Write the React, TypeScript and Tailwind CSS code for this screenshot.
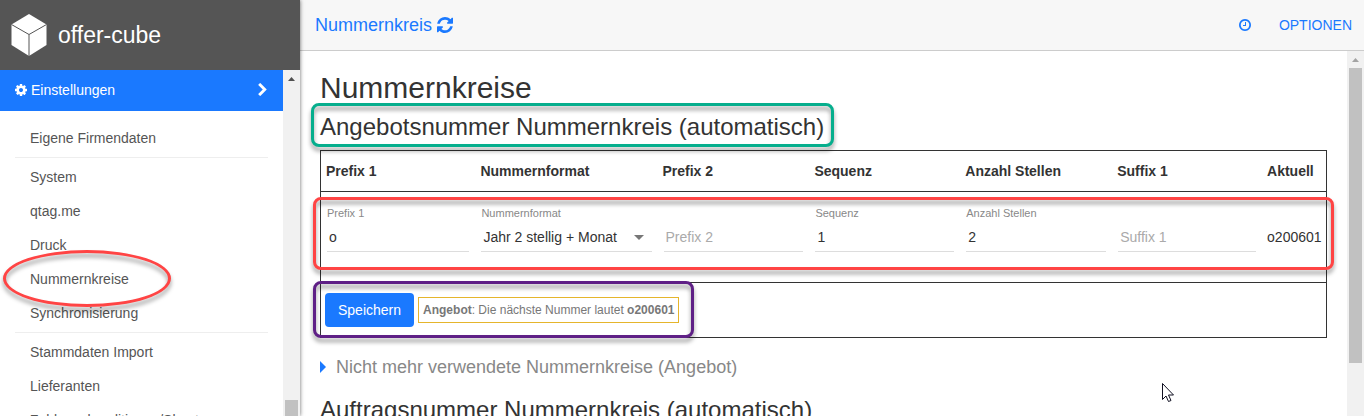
import clsx from "clsx";
import { useState } from "react";

const ICONS = {
  cog: {
    viewBox: "0 128 1536 1536",
    d: "M1024 896q0-106-75-181t-181-75-181 75-75 181 75 181 181 75 181-75 75-181zm512-109v222q0 12-8 23t-20 13l-185 28q-19 54-39 91 35 50 107 138 10 12 10 25t-9 23q-27 37-99 108t-94 71q-12 0-26-9l-138-108q-44 23-91 38-16 136-29 186-7 28-36 28h-222q-14 0-24.5-8.5t-11.5-21.5l-28-184q-49-16-90-37l-141 107q-10 9-25 9-14 0-25-11-126-114-165-168-7-10-7-23 0-12 8-23 15-21 51-66.5t54-70.5q-27-50-41-99l-183-27q-13-2-21-12.5t-8-23.5v-222q0-12 8-23t19-13l186-28q14-46 39-92-40-57-107-138-10-12-10-24 0-10 9-23 26-36 98.5-107.5t94.5-71.5q13 0 26 10l138 107q44-23 91-38 16-136 29-186 7-28 36-28h222q14 0 24.5 8.5t11.5 21.5l28 184q49 16 90 37l142-107q9-9 24-9 13 0 25 10 129 119 165 170 7 8 7 22 0 12-8 23-15 21-51 66.5t-54 70.5q26 50 41 98l183 28q13 2 21 12.5t8 23.5z",
  },
  chevron: {
    viewBox: "90 26 1036 1612",
    d: "M1107 877l-742 742q-19 19-45 19t-45-19l-166-166q-19-19-19-45t19-45l531-531-531-531q-19-19-19-45t19-45l166-166q19-19 45-19t45 19l742 742q19 19 19 45t-19 45z",
  },
  refresh: {
    viewBox: "0 128 1536 1536",
    d: "M1511 1056q0 5-1 7-64 268-268 434.5t-478 166.5q-146 0-282.5-55t-243.5-157l-129 129q-19 19-45 19t-45-19-19-45v-448q0-26 19-45t45-19h448q26 0 45 19t19 45-19 45l-137 137q71 66 161 102t187 36q134 0 250-65t186-179q11-17 53-117 8-23 30-23h192q13 0 22.5 9.5t9.5 22.5zm25-800v448q0 26-19 45t-45 19h-448q-26 0-45-19t-19-45 19-45l138-138q-148-137-349-137-134 0-250 65t-186 179q-11 17-53 117-8 23-30 23h-199q-13 0-22.5-9.5t-9.5-22.5v-7q65-268 270-434.5t480-166.5q146 0 284 55.5t245 156.5l130-129q19-19 45-19t45 19 19 45z",
  },
  clock: {
    viewBox: "0 128 1536 1536",
    d: "M896 544v448q0 14-9 23t-23 9h-320q-14 0-23-9t-9-23v-64q0-14 9-23t23-9h224v-352q0-14 9-23t23-9h64q14 0 23 9t9 23zm416 352q0-148-73-273t-198-198-273-73-273 73-198 198-73 273 73 273 198 198 273 73 273-73 198-198 73-273zm224 0q0 209-103 385.5t-279.5 279.5-385.5 103-385.5-103-279.5-279.5-103-385.5 103-385.5 279.5-279.5 385.5-103 385.5 103 279.5 279.5 103 385.5z",
  },
};

interface IconProps {
  name: keyof typeof ICONS;
  className?: string;
}

const Icon: React.FC<IconProps> = ({ name, className }) => (
  <svg viewBox={ICONS[name].viewBox} className={clsx("shrink-0 fill-current", className)} aria-hidden="true">
    <path d={ICONS[name].d} />
  </svg>
);

const CubeLogo = () => (
  <svg viewBox="0 0 36 42" className="h-[42px] w-9" aria-hidden="true">
    <path d="M18 0 35.500 10.500V31L18 42 .5 31V10.500Z" fill="#fff" />
    <path d="M.5 10.500 18 20.500 35.500 10.500M18 20.500V42" fill="none" stroke="#555" strokeWidth="1" />
  </svg>
);

// Coloured marker outline laid over the element it highlights
const Marker = ({ className }: { className: string }) => (
  <span
    aria-hidden="true"
    className={clsx(
      "pointer-events-none absolute z-10 border-3 drop-shadow-[0_4px_2px_rgba(0,0,0,0.4)]",
      className,
    )}
  />
);

const ScrollArrow = ({ className }: { className: string }) => (
  <svg viewBox="0 0 17 17" className={clsx("size-[17px] shrink-0 fill-current", className)} aria-hidden="true">
    <path d="M5 11h7L8.500 7Z" />
  </svg>
);

const MENU = [
  ["Eigene Firmendaten"],
  ["System", "qtag.me", "Druck", "Nummernkreise", "Synchronisierung"],
  ["Stammdaten Import", "Lieferanten", "Zahlungskonditionen/Skonto"],
];

const Sidebar = () => (
  <aside className="z-20 flex w-[300px] shrink-0 flex-col bg-white shadow-[0_0_4px_rgba(0,0,0,0.6)]">
    <div className="flex h-[70px] shrink-0 items-center gap-[11px] bg-[#555] pl-[11px] text-[23px] text-white">
      <CubeLogo />
      offer-cube
    </div>
    <div className="flex min-h-0 flex-1">
      <nav className="flex-1 overflow-hidden">
        <button
          type="button"
          className="flex h-[41px] w-full items-center gap-1 bg-[#1a79ff] pr-4 pb-0.5 pl-[15px] text-sm text-white">
          <Icon name="cog" className="size-3" />
          Einstellungen
          <Icon name="chevron" className="ml-auto h-[13px] w-[9px]" />
        </button>
        <div className="px-[15px] pt-[10px]">
          {MENU.map((group, i) => (
            <ul key={group[0]} className={clsx(i > 0 && "mt-0.5 border-t border-[#eee] pt-0.5")}>
              {group.map((item) => (
                <li key={item} className="relative">
                  <a href="#" className="block pl-[15px] text-sm leading-[34px] whitespace-nowrap text-[#555]">
                    {item}
                  </a>
                  {item === "Nummernkreise" && (
                    <Marker className="-top-3 -left-3 h-[57px] w-[168px] rounded-[50%] border-[#ff4444]" />
                  )}
                </li>
              ))}
            </ul>
          ))}
        </div>
      </nav>
      <div className="flex w-[17px] flex-col bg-[#f1f1f1]">
        <ScrollArrow className="text-[#505050]" />
        <div className="mx-0.5 mt-[313px] flex-1 bg-[#c1c1c1]" />
      </div>
    </div>
  </aside>
);

interface FieldProps {
  id: string;
  label: string;
  defaultValue?: string;
}

const FIELD_LABEL = "block h-3 text-[11px] leading-3 whitespace-nowrap text-[#888]";
const FIELD_CONTROL =
  "mt-[6px] block h-[27px] w-full appearance-none border-b border-[#ddd] bg-transparent px-0.5 pb-0.5 text-sm text-[#333] outline-none placeholder:text-[#aaa]";

const Field: React.FC<FieldProps> = ({ id, label, defaultValue = "" }) => {
  const [value, setValue] = useState<string>(defaultValue);

  return (
    <div>
      <label htmlFor={id} className={FIELD_LABEL}>
        {value && label}
      </label>
      <input
        id={id}
        value={value}
        placeholder={label}
        aria-label={label}
        onChange={(e) => setValue(e.target.value)}
        className={FIELD_CONTROL}
      />
    </div>
  );
};

const FormatSelect = () => (
  <div className="relative">
    <label htmlFor="format" className={FIELD_LABEL}>
      Nummernformat
    </label>
    <select id="format" className={FIELD_CONTROL}>
      <option>Jahr 2 stellig + Monat</option>
      <option>Jahr 4 stellig + Monat</option>
    </select>
    <svg
      viewBox="0 0 10 5"
      className="pointer-events-none absolute right-2 bottom-3 h-[5px] w-[10px] fill-[#777]"
      aria-hidden="true">
      <path d="M0 0h10L5 5Z" />
    </svg>
  </div>
);

const COLUMNS = [
  { title: "Prefix 1", width: "w-[15.4%]" },
  { title: "Nummernformat", width: "w-[18.1%]" },
  { title: "Prefix 2", width: "w-[15.1%]" },
  { title: "Sequenz", width: "w-[15%]" },
  { title: "Anzahl Stellen", width: "w-[15.1%]" },
  { title: "Suffix 1", width: "w-[14.9%]" },
  { title: "Aktuell", width: "w-[6.4%]" },
];

const FIELD_CELL = "px-1.5 pt-[15px] align-top";

const NumberTable = () => (
  <table className="mt-[10px] w-full table-fixed border-collapse border border-[#333] text-sm">
    <thead>
      <tr className="h-[41px] border-b border-[#333]">
        {COLUMNS.map((col) => (
          <th key={col.title} className={clsx("pl-[5px] text-left font-bold whitespace-nowrap", col.width)}>
            {col.title}
          </th>
        ))}
      </tr>
    </thead>
    <tbody>
      <tr className="relative h-[91px] border-b border-[#333]">
        <td className={FIELD_CELL}>
          <Field id="prefix1" label="Prefix 1" defaultValue="o" />
          <Marker className="top-[5px] -right-[7px] bottom-3 -left-2 rounded-lg border-[#ff4444]" />
        </td>
        <td className={FIELD_CELL}>
          <FormatSelect />
        </td>
        <td className={FIELD_CELL}>
          <Field id="prefix2" label="Prefix 2" />
        </td>
        <td className={FIELD_CELL}>
          <Field id="sequenz" label="Sequenz" defaultValue="1" />
        </td>
        <td className={FIELD_CELL}>
          <Field id="stellen" label="Anzahl Stellen" defaultValue="2" />
        </td>
        <td className={FIELD_CELL}>
          <Field id="suffix1" label="Suffix 1" />
        </td>
        <td className="pl-[5px]">o200601</td>
      </tr>
      <tr className="h-[55px]">
        <td colSpan={7} className="px-1">
          <div className="relative inline-flex items-center gap-1 align-middle">
            <button type="button" className="h-[34px] rounded bg-[#1a79ff] px-[13px] text-sm text-white">
              Speichern
            </button>
            <p className="border border-[#e5b52c] px-1 text-xs leading-6 whitespace-nowrap text-[#777]">
              <b>Angebot</b>: Die nächste Nummer lautet <b>o200601</b>
            </p>
            <Marker className="-top-3 -right-[15px] -bottom-[11px] -left-3 rounded-lg border-[#5f2086]" />
          </div>
        </td>
      </tr>
    </tbody>
  </table>
);

const MouseCursor = () => (
  <svg viewBox="0 0 12 19" className="pointer-events-none absolute top-[332px] left-[862px] h-[19px] w-3" aria-hidden="true">
    <path d="M.5.5v16l3.500-3.500 2.500 5.500 2.500-1-2.500-5.500h5Z" fill="#fff" stroke="#112" />
  </svg>
);

const App: React.FC = () => {
  return (
    <div className="flex h-screen overflow-hidden bg-white font-['Liberation_Sans',Arial,sans-serif] text-[#333]">
      <Sidebar />
      <div className="flex min-w-0 flex-1 flex-col">
        <header className="flex h-[51px] shrink-0 items-center border-b border-[#ccc] bg-[#f7f7f7] pr-3 pl-[15px] text-[#1a79ff]">
          <a href="#" className="flex items-center gap-[5px] text-lg">
            Nummernkreis
            <Icon name="refresh" className="size-4" />
          </a>
          <button type="button" aria-label="Verlauf" className="ml-auto">
            <Icon name="clock" className="size-3" />
          </button>
          <button type="button" className="ml-7 text-sm">
            OPTIONEN
          </button>
        </header>
        <div className="relative flex min-h-0 flex-1">
          <main className="min-w-0 flex-1 overflow-hidden px-5 pt-5">
            <h1 className="text-[30px] leading-[33px]">Nummernkreise</h1>
            <h2 className="relative mt-[10px] w-fit text-2xl leading-[26px]">
              Angebotsnummer Nummernkreis (automatisch)
              <Marker className="-top-[11px] -right-[10px] -bottom-[7px] -left-[9px] rounded-lg border-[#06ae8d]" />
            </h2>
            <NumberTable />
            <button type="button" className="mt-[19px] flex items-center gap-[10px] text-lg leading-5 text-[#888]">
              <svg viewBox="0 0 6 12" className="h-3 w-1.5 fill-[#1a79ff]" aria-hidden="true">
                <path d="M0 0v12l6-6Z" />
              </svg>
              Nicht mehr verwendete Nummernkreise (Angebot)
            </button>
            <h2 className="mt-5 text-2xl leading-[26px]">Auftragsnummer Nummernkreis (automatisch)</h2>
          </main>
          <div className="w-[17px] shrink-0 bg-[#f1f1f1]">
            <ScrollArrow className="text-[#a3a3a3]" />
            <div className="mx-0.5 h-[295px] bg-[#c1c1c1]" />
          </div>
          <MouseCursor />
        </div>
      </div>
    </div>
  );
};

export default App;
